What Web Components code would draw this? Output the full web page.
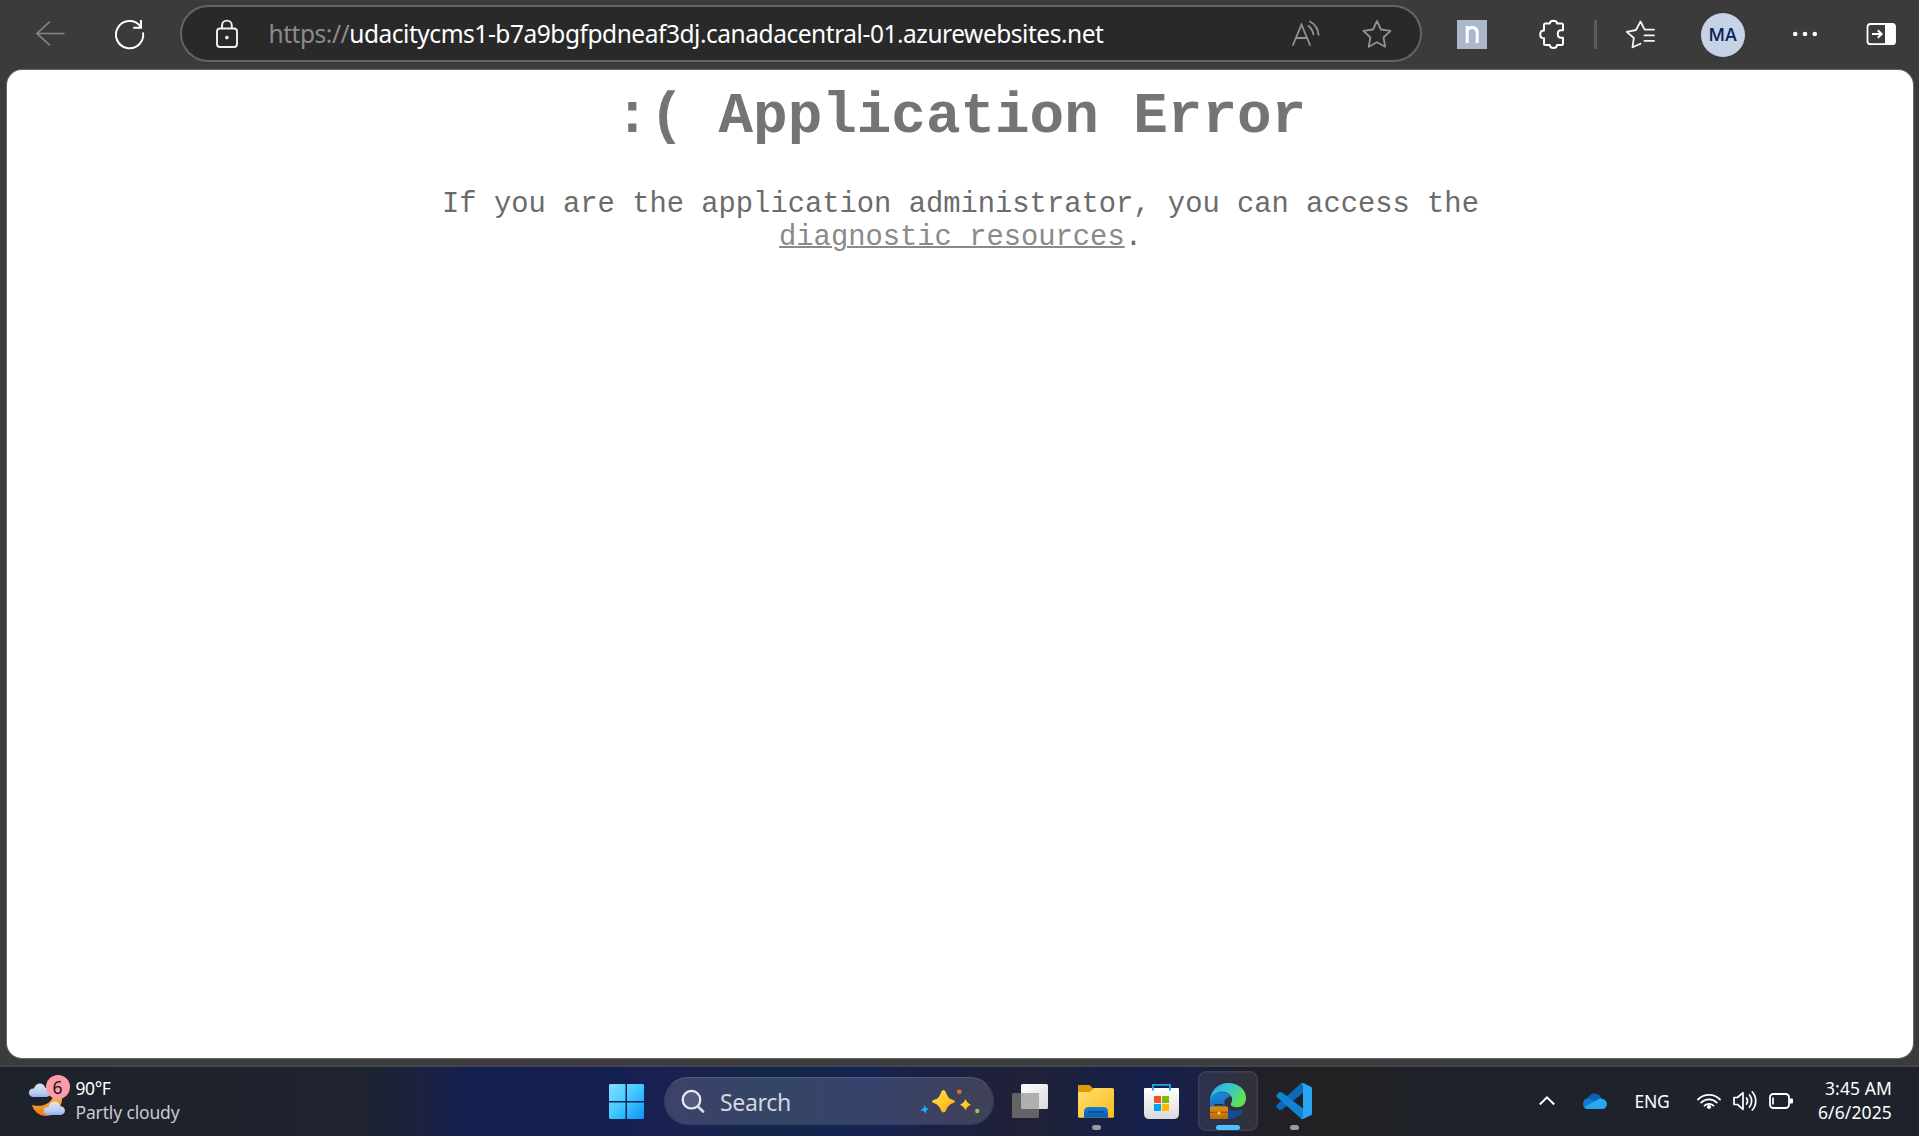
<!DOCTYPE html>
<html lang="en">
<head>
<meta charset="utf-8">
<title>Application Error</title>
<style>
html,body{margin:0;height:100%;overflow:hidden;background:#3b3b3b}
body{font-family:"Noto Sans","Open Sans",sans-serif}
</style>
</head>
<body>
<desktop-screen></desktop-screen>
<script>
/* Each icon: [x, y, width, height] of its view box in screen units, then its markup. */
const ICONS = {
  back: [[34,15,34,38], `<path d="M64.5 33.5H37M50 21.5L37 33.5L50 45.5" fill="none" stroke="#868686" stroke-width="1.7"/>`],
  refresh: [[113,15,34,38], `<g fill="none" stroke="#fff" stroke-width="2"><path d="M143 32.5A13.6 13.6 0 1 1 140.5 26.6"/><path d="M141 20V27.8H133.2"/></g>`],
  lock: [[214,15,26,36], `<g fill="none" stroke="#f2f2f2" stroke-width="1.9"><rect x="217" y="27.5" width="20" height="18.5" rx="3"/><path d="M222 27.500V24.500A4.900 4.900 0 0 1 231.800 24.500V27.500"/></g><circle cx="226.900" cy="36.600" r="1.800" fill="#fff"/>`],
  read: [[1290,14,34,38], `<g fill="none" stroke="#929292" stroke-width="1.8" stroke-linecap="round"><path d="M1293 44L1301.500 23.500L1310 44M1296.200 37H1306.800"/><path d="M1308.500 25A13 13 0 0 1 1313.400 33.300"/><path d="M1310 20.500A17 17 0 0 1 1318.600 33.800"/></g>`],
  star: [[1360,15,34,38], `<path d="M1377 21L1380.900 29.500L1390.500 30.900L1383.500 37.500L1385.200 46.700L1377 42.200L1368.700 46.700L1370.400 37.500L1363.400 30.900L1373 29.500Z" fill="none" stroke="#929292" stroke-width="1.8" stroke-linejoin="round"/>`],
  ext: [[1457,20,30,29], `<rect x="1457" y="20" width="30" height="29" fill="#adb7cb"/><path d="M1467.200 43V26M1467.200 32C1467.200 28.500 1469 27.500 1472 27.500C1476 27.500 1477.200 29.500 1477.200 33V43" fill="none" stroke="#fff" stroke-width="3"/>`],
  puzzle: [[1537,15,30,38], `<path d="M1544 25Q1544 23.500 1545.500 23.500H1549.800C1550 19.800 1556.800 19.800 1557 23.500H1561.500Q1563 23.500 1563 25V30.300H1561C1556.700 30.300 1556.700 37.700 1561 37.700H1563V43.500Q1563 45 1561.500 45H1557C1556.800 49 1550 49 1549.800 45H1545.500Q1544 45 1544 43.500V38.300C1539 38.300 1539 30.500 1544 30.500Z" fill="none" stroke="#fff" stroke-width="2" stroke-linejoin="round"/>`],
  favs: [[1624,15,34,38], `<g fill="none" stroke="#f4f4f4" stroke-width="1.800" stroke-linecap="round" stroke-linejoin="round"><path d="M1640.500 43.700L1632.500 47.300L1633.800 38L1626.800 31.800L1636 30L1640.500 21.500L1644.700 29.700H1654M1644.500 35.400H1654M1644.500 40.900H1654"/></g>`],
  more: [[1790,25,30,18], `<g fill="#fff"><circle cx="1795.200" cy="34" r="2.300"/><circle cx="1805" cy="34" r="2.300"/><circle cx="1814.800" cy="34" r="2.300"/></g>`],
  side: [[1864,15,34,38], `<rect x="1867.500" y="24" width="27.500" height="20.200" rx="3" fill="none" stroke="#fff" stroke-width="1.800"/><path d="M1885 23.500H1893Q1895.500 23.500 1895.500 26V42Q1895.500 44.500 1893 44.500H1885Z" fill="#fff"/><path d="M1872 34H1881M1877.800 30.300L1881.600 34L1877.800 37.700" fill="none" stroke="#fff" stroke-width="2"/>`],
  weather: [[28,1072,43,46], `<defs><linearGradient id="c" x2="0" y2="1"><stop stop-color="#dbe6fb"/><stop offset=".7" stop-color="#b9ccf2"/><stop offset="1" stop-color="#8fb0ee"/></linearGradient><linearGradient id="m" x2="0" y2="1"><stop stop-color="#ffc23c"/><stop offset="1" stop-color="#f0761e"/></linearGradient></defs>
    <path d="M61 1091C65 1103 57 1115 46 1115C39 1115 33.500 1110 32 1104C43 1107 52 1102 54 1093Z" fill="url(#m)"/><path d="M34 1096C27 1096 27.500 1087 34 1087.500C36 1080.500 44 1081 45.500 1087C52 1087 52 1096 46 1096Z" fill="url(#c)"/><path d="M48.500 1114C42 1114 42.500 1105.500 48.500 1106C50 1099 58.500 1099 60 1105C66.500 1105 66.500 1114 60.500 1114Z" fill="url(#c)"/>`],
  start: [[609,1084,35,35], `<defs><linearGradient id="w" gradientUnits="userSpaceOnUse" x1="609" y1="1084" x2="644" y2="1119"><stop stop-color="#83dfff"/><stop offset=".5" stop-color="#40c8ff"/><stop offset="1" stop-color="#0a94f7"/></linearGradient></defs><path fill="url(#w)" d="M610 1084H625.500V1101H609V1085ZM627 1084H643L644 1085V1101H627ZM609 1102.500H625.500V1119H610L609 1118ZM627 1102.500H644V1118L643 1119H627Z"/>`],
  search: [[680,1088,26,26], `<circle cx="691.500" cy="1099.700" r="8.800" fill="#ffffff22" stroke="#eceef5" stroke-width="2.200"/><path d="M698 1106.500L703 1111.500" stroke="#d8dae4" stroke-width="2.800" stroke-linecap="round"/>`],
  sparkle: [[919,1086,64,30], `<defs><linearGradient id="g" x2="1" y2="1"><stop stop-color="#ffdf50"/><stop offset=".5" stop-color="#ffcc22"/><stop offset="1" stop-color="#f79a1c"/></linearGradient></defs><g fill="url(#g)"><path d="M943.500 1090Q945.300 1090 946.200 1093Q948 1098.500 952 1099.500L954.500 1100.500Q955.300 1101.500 954.500 1102.500L952 1103.500Q948 1105 946.200 1110Q945.300 1112.500 943.500 1112.500Q941.700 1112.500 940.800 1110Q939 1105 935 1103.500L932.500 1102.500Q931.700 1101.500 932.500 1100.500L935 1099.500Q939 1098.500 940.800 1093Q941.700 1090 943.500 1090Z"/><path d="M965.500 1099Q967 1103.300 971 1104.700Q967 1106.200 965.500 1110.500Q964 1106.200 960 1104.700Q964 1103.300 965.500 1099Z"/></g><circle cx="959.300" cy="1091.800" r="2.300" fill="#f06a2a"/><circle cx="977.300" cy="1111" r="2.200" fill="#8cc84b"/><path d="M924.500 1105L926 1108L929 1108.500L926.500 1110.500L926 1113.500L923.500 1111L920.500 1110.500L923.500 1108Z" fill="#1cb0f5"/>`],
  tasks: [[1012,1083,36,36], `<defs><linearGradient id="t" x2="1" y2="1"><stop stop-color="#fff"/><stop offset="1" stop-color="#d8d8d8"/></linearGradient></defs><rect x="1012" y="1093" width="27" height="25" rx="1.500" fill="#646464"/><rect x="1021" y="1084" width="27" height="25" rx="1.500" fill="url(#t)"/><path d="M1021 1093H1039V1109H1021Z" fill="#b0b0b0"/>`],
  folder: [[1078,1083,36,36], `<defs><linearGradient id="f" x2="1" y2="1"><stop stop-color="#ffdf72"/><stop offset="1" stop-color="#fdbb1c"/></linearGradient><linearGradient id="fb" x2="0" y2="1"><stop stop-color="#1180d4"/><stop offset="1" stop-color="#0a5fae"/></linearGradient></defs><path d="M1078 1086Q1078 1085 1079 1085H1089.500L1093.500 1089H1113V1094H1078Z" fill="#dd9c07"/><path d="M1078 1092H1088.500Q1091 1092 1093.500 1088H1112.500Q1114 1088 1114 1089.500V1116.500Q1114 1117.700 1112.800 1117.700H1079.200Q1078 1117.700 1078 1116.500Z" fill="url(#f)"/><path d="M1084 1117.700V1112Q1084 1107 1089 1107H1103Q1108 1107 1108 1112V1117.700Z" fill="url(#fb)"/><path d="M1089 1112H1103" stroke="#074883" stroke-width="1.600" stroke-linecap="round"/>`],
  store: [[1144,1083,36,36], `<defs><linearGradient id="s" x2="0" y2="1"><stop stop-color="#fff"/><stop offset="1" stop-color="#dadada"/></linearGradient></defs><path d="M1144 1088.500Q1144 1088 1145 1088H1178Q1179 1088 1179 1089V1113.500Q1179 1119 1173.500 1119H1149.500Q1144 1119 1144 1113.500Z" fill="url(#s)"/><path d="M1152.900 1090.500V1084.900H1170.100V1090.500" fill="none" stroke="#1fa6e8" stroke-width="1.900"/><path d="M1154 1096H1161V1103H1154Z" fill="#f25022"/><path d="M1162 1096H1169V1103H1162Z" fill="#7fba00"/><path d="M1154 1104H1161V1111H1154Z" fill="#00a4ef"/><path d="M1162 1104H1169V1111H1162Z" fill="#ffb900"/>`],
  edge: [[1210,1083,36,36], `<defs><linearGradient id="e1" x2="1" y2=".45"><stop stop-color="#2aa9ec"/><stop offset=".5" stop-color="#36c4d8"/><stop offset="1" stop-color="#62e052"/></linearGradient><linearGradient id="e2" x2=".3" y2="1"><stop stop-color="#1b8fe0"/><stop offset="1" stop-color="#0c59a4"/></linearGradient><linearGradient id="e3" x2="0" y2="1"><stop stop-color="#e08f14"/><stop offset="1" stop-color="#b96a05"/></linearGradient></defs><path d="M1210 1101C1211 1092 1224 1089 1231 1096C1227 1097 1223.500 1100 1224.500 1105C1226 1111 1234 1113 1243 1110.500C1239 1117 1231 1120 1224 1118.500C1215 1117 1209 1110 1210 1101Z" fill="url(#e2)"/><path d="M1227 1108.500C1232 1111.500 1238 1110.500 1243.300 1109.500C1239.500 1116.500 1232 1119.800 1226 1119Z" fill="#134d97"/><path d="M1210 1101C1210 1091 1218 1083 1228 1083C1239 1083 1246 1090 1246 1098C1246 1104.500 1241.500 1107.500 1236.500 1107.200C1231.500 1107 1230 1105 1231.300 1103C1234.500 1097 1228.500 1091.500 1221.500 1091.800C1215 1092.200 1210.500 1096.500 1210 1101Z" fill="url(#e1)"/><path d="M1215.500 1106.500V1104.800H1222.500V1106.500" fill="none" stroke="#4b2a08" stroke-width="1.600"/><rect x="1210" y="1106.500" width="18" height="12.500" rx="1" fill="url(#e3)"/><path d="M1210 1112.300H1228" stroke="#9a5200" stroke-width="1"/><circle cx="1219" cy="1113" r="1.500" fill="#ffd15b"/>`],
  code: [[1276,1083,36,36], `<path d="M1303 1083V1093L1282 1109.500Q1280.500 1110.500 1279 1109.500L1276.700 1107.300Q1275.700 1106 1276.700 1105L1301 1083.500Z" fill="#0a6ab8"/><path d="M1303 1119V1108.500L1282 1092.500Q1280.500 1091.500 1279 1092.500L1276.700 1094.700Q1275.700 1096 1276.700 1097L1301 1118.500Z" fill="#1083d2"/><path d="M1301 1083.500Q1302 1082.800 1303.500 1083.200L1311 1086.700Q1312 1087.200 1312 1088.300V1113.700Q1312 1114.800 1311 1115.300L1303.500 1118.800Q1302 1119.200 1301 1118.500Q1303 1118.500 1303 1116V1086Q1303 1083.800 1301 1083.500Z" fill="#29a5f2"/>`],
  chevron: [[1537,1093,20,16], `<path d="M1539.800 1104.500L1547 1097.300L1554.200 1104.500" fill="none" stroke="#fff" stroke-width="2"/>`],
  cloud: [[1583,1092,24,18], `<path d="M1588 1099C1589 1092 1599 1091.500 1601.500 1098.500L1604 1106H1588Z" fill="#0a61b5"/><path d="M1583 1104C1583 1099 1587 1097.500 1590.500 1098.700L1602 1105L1594 1109H1587.500Q1583 1109 1583 1104Z" fill="#107bd2"/><path d="M1584.200 1107L1596 1100.500Q1598.500 1098 1602 1098.700Q1607 1100 1607 1104Q1606.500 1109 1602 1109H1588Q1585.500 1109 1584.200 1107Z" fill="#28a8ea"/>`],
  wifi: [[1696,1090,26,22], `<g fill="none" stroke="#fff" stroke-width="1.800" stroke-linecap="round"><path d="M1698 1099.500A15.500 15.500 0 0 1 1720 1099.500"/><path d="M1701.200 1102.600A11 11 0 0 1 1716.800 1102.600"/><path d="M1704.500 1105.600A6.500 6.500 0 0 1 1713.500 1105.600"/></g><circle cx="1709" cy="1107" r="2.100" fill="#fff"/>`],
  volume: [[1732,1089,26,24], `<g fill="none" stroke="#fff" stroke-width="1.700" stroke-linecap="round" stroke-linejoin="round"><path d="M1734 1097.500H1737.500L1743 1092.700V1109.300L1737.500 1104.500H1734Z"/><path d="M1746.500 1098A5 5 0 0 1 1746.500 1104M1749.500 1095A9.500 9.500 0 0 1 1749.500 1107M1752.300 1092A13.500 13.500 0 0 1 1752.300 1110"/></g>`],
  battery: [[1768,1091,27,20], `<rect x="1770" y="1094" width="19" height="14" rx="3.300" fill="none" stroke="#fff" stroke-width="1.800"/><path d="M1773 1097.500V1104.500" stroke="#fff" stroke-width="1.700"/><path d="M1790 1098.500H1792Q1793 1098.500 1793 1099.500V1102.500Q1793 1103.500 1792 1103.500H1790Z" fill="#fff"/>`]
};

function define(name, html, setup) {
  customElements.define(name, class extends HTMLElement {
    constructor() {
      super();
      this.attachShadow({ mode: "open" }).innerHTML = html;
    }
    connectedCallback() { if (setup) setup(this, this.shadowRoot); }
  });
}

/* Vector icon, chosen by name. */
define("ui-icon", `<style>:host{display:block;flex:none}svg{display:block}</style>`, (el, root) => {
  const [b, body] = ICONS[el.getAttribute("name")];
  root.innerHTML += `<svg width="${b[2]}" height="${b[3]}" viewBox="${b.join(" ")}">${body}</svg>`;
});

/* One line of text whose tracking is adjusted to fill the given width. */
define("fit-text", `<style>:host{display:block;flex:none;white-space:pre}span{display:inline-block}</style><span><slot></slot></span>`, (el, root) => {
  const span = root.querySelector("span");
  const target = +el.getAttribute("width");
  const natural = span.getBoundingClientRect().width;
  span.style.letterSpacing = (target - natural) / el.textContent.length + "px";
  el.style.width = target + "px";
});

define("address-bar", `<style>
:host{display:flex;align-items:center;box-sizing:border-box;width:1242px;height:57px;border:2px solid #646464;border-radius:29px;background:#292929;color:#fff;font-size:24.500px;line-height:34px;padding-left:32px;flex:none}
fit-text{margin-left:28.500px}
i{font-style:normal;color:#8b8b8b}
.read{margin-left:186.500px}.star{margin-left:36px}
</style>
<ui-icon name="lock"></ui-icon><fit-text width="835"><i>https://</i>udacitycms1-b7a9bgfpdneaf3dj.canadacentral-01.azurewebsites.net</fit-text>
<ui-icon class="read" name="read"></ui-icon><ui-icon class="star" name="star"></ui-icon>`);

define("profile-avatar", `<style>
:host{display:flex;flex:none;align-items:center;justify-content:center;width:44px;height:44px;border-radius:50%;background:#c6d2e6;color:#08205c;font:500 17.500px/24px Inter,sans-serif}
</style><slot></slot>`);

define("browser-toolbar", `<style>
:host{display:flex;align-items:center;height:70px;padding:0 0 3px 34px;box-sizing:border-box}
hr{width:3px;height:29px;border:0;background:#5b5b5b;margin:0 0 0 27px;flex:none}
profile-avatar{margin-left:43px;margin-top:2px}
ui-icon,hr{margin-top:1px}
</style>
<ui-icon name="back"></ui-icon><ui-icon name="refresh" style="margin-left:45px"></ui-icon>
<address-bar style="margin-left:33px"></address-bar>
<ui-icon name="ext" style="margin-left:35px"></ui-icon><ui-icon name="puzzle" style="margin-left:50px"></ui-icon>
<hr><ui-icon name="favs" style="margin-left:27px"></ui-icon>
<profile-avatar>MA</profile-avatar>
<ui-icon name="more" style="margin-left:45px"></ui-icon><ui-icon name="side" style="margin-left:44px"></ui-icon>`);

define("error-page", `<style>
:host{display:block;box-sizing:border-box;height:988px;margin:0 6px 0 7px;padding:14px 0 0 1px;background:#fff;border-radius:15px;box-shadow:0 0 0 1px #696969;text-align:center;font-family:"Liberation Mono","Courier New",monospace;color:#6b6b6b}
h1{margin:0 0 38.600px;font-size:57.600px;line-height:65.250px;font-weight:700;color:#747474}
p{margin:0 auto;width:1100px;font-size:28.800px;line-height:33px}
a{color:#8a8a8a;text-decoration:underline;text-decoration-thickness:2px}
</style>
<h1>:( Application Error</h1>
<p>If you are the application administrator, you can access the <a>diagnostic resources</a>.</p>`);

define("weather-widget", `<style>
:host{display:flex;align-items:flex-start;width:300px;flex:none;font-size:17.500px;line-height:24px;color:#fff}
.pic{position:relative;margin-top:-3px}
b{position:absolute;left:17.500px;top:2px;width:24px;height:24px;border-radius:50%;background:#ff9ba6;color:#111;font-weight:400;text-align:center;font-size:17.500px}
.t{margin-left:4.500px}.d{color:#c9cacd}
</style>
<div class="pic"><ui-icon name="weather"></ui-icon><b>6</b></div>
<div class="t"><fit-text width="35">90°F</fit-text><fit-text class="d" width="104">Partly cloudy</fit-text></div>`);

define("search-pill", `<style>
:host{display:flex;align-items:center;box-sizing:border-box;width:330px;height:48px;flex:none;border:1.500px solid #ffffff20;border-top-color:#ffffff40;border-radius:24px;background:#ffffff26;background-clip:padding-box;padding-left:15px;color:#d3d6e0;font-size:23px;line-height:32px}
fit-text{margin-left:14px;margin-top:2px}
.sp{margin-left:128px}
</style>
<ui-icon name="search"></ui-icon><fit-text width="71">Search</fit-text><ui-icon class="sp" name="sparkle"></ui-icon>`);

define("task-app", `<style>
:host{display:flex;flex:none;flex-direction:column;align-items:center;box-sizing:border-box;width:60px;height:60px;padding-top:12px;border-radius:8px;margin-right:6px}
:host([active]){background:#ffffff14;box-shadow:inset 0 0 0 1.500px #ffffff12}
u{display:none;margin-top:6px;width:9px;height:5px;border-radius:3px;background:#9a9ba4}
:host([running]) u,:host([active]) u{display:block}
:host([active]) u{width:24px;background:#4cc2ff}
</style><slot></slot><u></u>`);

define("system-tray", `<style>
:host{display:flex;align-items:center;flex:none;color:#fff;font-size:17.500px;line-height:24px}
.c{display:flex;flex-direction:column;align-items:flex-end;margin-left:23.500px;margin-top:-2px}
</style>
<ui-icon name="chevron"></ui-icon><ui-icon name="cloud" style="margin-left:26px"></ui-icon>
<fit-text width="35" style="margin-left:28px">ENG</fit-text>
<ui-icon name="wifi" style="margin-left:26px"></ui-icon><ui-icon name="volume" style="margin-left:10px"></ui-icon><ui-icon name="battery" style="margin-left:10px"></ui-icon>
<div class="c"><fit-text width="67">3:45 AM</fit-text><fit-text width="74">6/6/2025</fit-text></div>`);

define("win-taskbar", `<style>
:host{display:flex;align-items:center;box-sizing:border-box;height:71px;margin-top:7px;padding:0 0 2px 28px;border-top:2px solid #42444e;background:linear-gradient(90deg,#1e222b 0,#1e232d 360px,#1b2140 420px,#14204f 470px,#152052 620px,#1a2150 680px,#12264a 770px,#152352 870px,#1d2040 960px,#1f2136 1030px,#14204c 1150px,#1b2044 1190px,#202028 1260px,#222222 1330px,#1e222b 1450px,#1e222b 100%)}
.mid{display:flex;align-items:center;margin-left:281px}
.apps{display:flex;margin-left:6px}
.start{margin-top:1px}
weather-widget{margin-top:-1px}
system-tray{margin-left:206.500px}
</style>
<weather-widget></weather-widget>
<div class="mid"><ui-icon class="start" name="start"></ui-icon><search-pill style="margin-left:20px"></search-pill>
<div class="apps">
<task-app><ui-icon name="tasks"></ui-icon></task-app>
<task-app running><ui-icon name="folder"></ui-icon></task-app>
<task-app><ui-icon name="store"></ui-icon></task-app>
<task-app active><ui-icon name="edge"></ui-icon></task-app>
<task-app running><ui-icon name="code"></ui-icon></task-app>
</div></div>
<system-tray></system-tray>`);

define("desktop-screen", `<style>:host{display:flex;flex-direction:column;width:1919px;height:1136px;overflow:hidden;background:#3b3b3b}</style>
<browser-toolbar></browser-toolbar><error-page></error-page><win-taskbar></win-taskbar>`);
</script>
</body>
</html>
